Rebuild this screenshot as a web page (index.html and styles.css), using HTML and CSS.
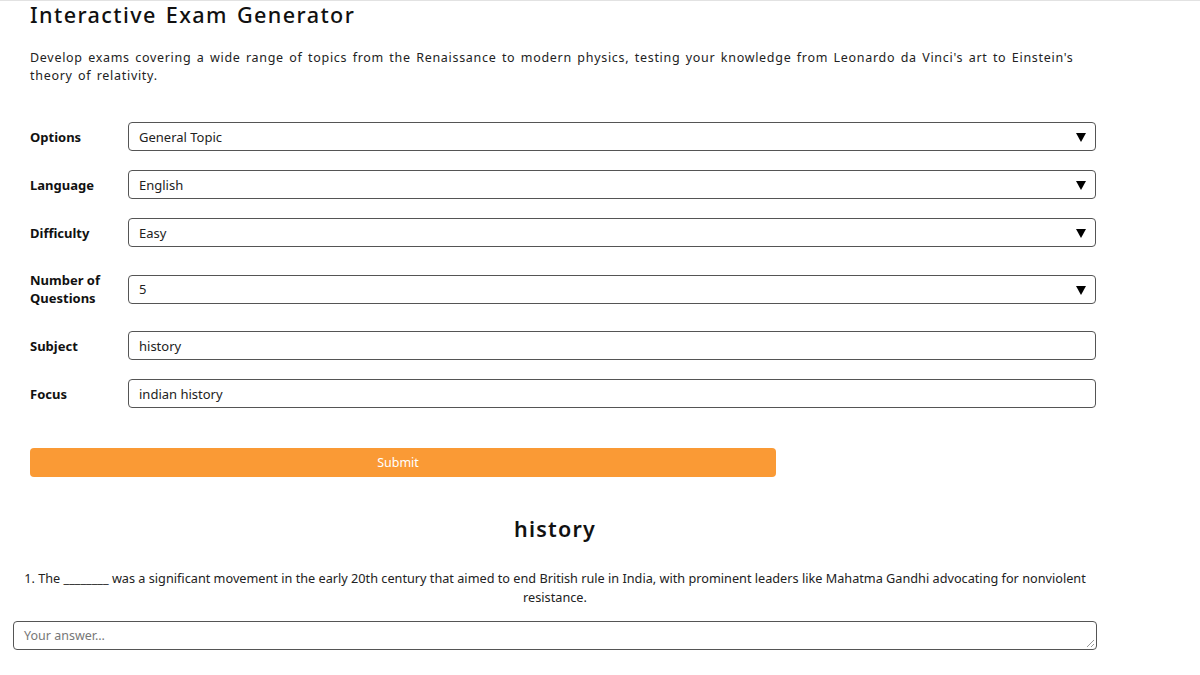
FILE: index.html
```html
<!DOCTYPE html>
<html lang="en">
<head>
<meta charset="utf-8">
<title>Interactive Exam Generator</title>
<link rel="stylesheet" href="styles.css">
</head>
<body>
<div class="topline"></div>
<main class="page">
  <section class="generator">
    <h1 class="title">Interactive Exam Generator</h1>
    <p class="intro">Develop exams covering a wide range of topics from the Renaissance to modern physics, testing your knowledge from Leonardo da Vinci's art to Einstein's theory of relativity.</p>

    <form class="form">
      <div class="row">
        <label class="label">Options</label>
        <div class="select"><span class="value">General Topic</span><span class="arrow"></span></div>
      </div>
      <div class="row">
        <label class="label">Language</label>
        <div class="select"><span class="value">English</span><span class="arrow"></span></div>
      </div>
      <div class="row">
        <label class="label">Difficulty</label>
        <div class="select"><span class="value">Easy</span><span class="arrow"></span></div>
      </div>
      <div class="row">
        <label class="label">Number of Questions</label>
        <div class="select"><span class="value">5</span><span class="arrow"></span></div>
      </div>
      <div class="row">
        <label class="label">Subject</label>
        <div class="input">history</div>
      </div>
      <div class="row">
        <label class="label">Focus</label>
        <div class="input">indian history</div>
      </div>
      <div class="submit">Submit</div>
    </form>
  </section>

  <section class="quiz">
    <h2 class="quiz-title">history</h2>
    <p class="question">1. The ________ was a significant movement in the early 20th century that aimed to end British rule in India, with prominent leaders like Mahatma Gandhi advocating for nonviolent resistance.</p>
    <div class="answer"><span class="placeholder">Your answer...</span><span class="grip"></span></div>
  </section>
</main>
</body>
</html>
```

FILE: styles.css
```css
* { box-sizing: border-box; }

html, body {
  margin: 0;
  padding: 0;
  background: #ffffff;
}

body {
  font-family: "Noto Sans", "Open Sans", "DejaVu Sans", sans-serif;
  color: #111;
  font-size: 13px;
}

.topline {
  height: 1px;
  background: #e2e2e2;
}

.page {
  width: 1097px;
}

.generator {
  padding-left: 30px;
}

.title {
  margin: 0;
  font-size: 21.6px;
  font-weight: 500;
  line-height: 28px;
  letter-spacing: 1.4px;
  word-spacing: 2px;
  color: #111;
}

.intro {
  margin: 20px 0 0;
  font-size: 12.5px;
  line-height: 18px;
  letter-spacing: 0.7px;
  word-spacing: 1.5px;
  color: #222;
  width: 1066px;
}

.form {
  margin-top: 37px;
  width: 1066px;
}

.row {
  display: flex;
  align-items: center;
  margin-bottom: 19px;
}

.label {
  width: 98px;
  flex: none;
  font-weight: 700;
  font-size: 13px;
  line-height: 18px;
  padding: 5px 12px 5px 0;
  color: #111;
}

.select, .input {
  position: relative;
  flex: 1;
  height: 29px;
  border: 1px solid #555;
  border-radius: 4px;
  padding: 0 10px;
  display: flex;
  align-items: center;
  font-size: 13px;
  color: #222;
  background: #fff;
}

.arrow {
  position: absolute;
  right: 9px;
  top: 10px;
  width: 0;
  height: 0;
  border-left: 5.5px solid transparent;
  border-right: 5.5px solid transparent;
  border-top: 9px solid #000;
}

.submit {
  margin-top: 40px;
  width: 746px;
  height: 29px;
  background: #fa9a35;
  border-radius: 4px;
  color: #fff;
  font-size: 12.5px;
  display: flex;
  align-items: center;
  justify-content: center;
  padding-right: 10px;
}

.quiz {
  margin-left: 13px;
  width: 1084px;
  text-align: center;
}

.quiz-title {
  margin: 37px 0 0;
  font-size: 21.5px;
  font-weight: 600;
  line-height: 30px;
  letter-spacing: 1.2px;
  color: #111;
}

.question {
  margin: 25px 0 0;
  padding: 0 8px;
  font-size: 12.7px;
  line-height: 19px;
  color: #222;
}

.answer {
  position: relative;
  margin-top: 14px;
  height: 29px;
  border: 1px solid #555;
  border-radius: 4px;
  padding: 0 10px;
  display: flex;
  align-items: center;
  text-align: left;
}

.placeholder {
  color: #777;
  font-size: 12.5px;
}

.grip {
  position: absolute;
  right: 2px;
  bottom: 2px;
  width: 7px;
  height: 7px;
  background: linear-gradient(135deg, transparent 45%, #999 45%, #999 55%, transparent 55%, transparent 75%, #999 75%, #999 85%, transparent 85%);
}
```
